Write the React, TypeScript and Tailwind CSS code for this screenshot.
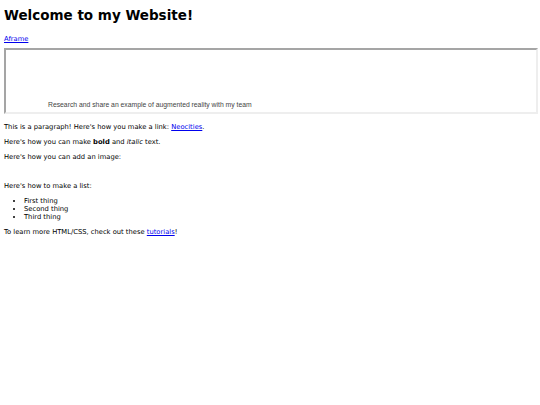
export default function App() {
  return (
    <div className="min-h-[405px] bg-white px-1 pt-px text-[6.75px] leading-[7.86px] text-black font-['DejaVu_Sans',Verdana,sans-serif]">
      <h1 className="mt-[7px] mb-[12px] text-[13.5px] font-bold leading-[15.7px]">Welcome to my Website!</h1>

      <p className="mt-[6.75px] mb-[4.75px]">
        <a href="#" className="text-[#0000ee] underline">Aframe</a>
      </p>

      {/* embedded frame */}
      <div className="h-[66px] w-[534px] border-2 border-t-[#a5a5a5] border-l-[#a5a5a5] border-r-[#eeeeee] border-b-[#eeeeee]">
        <div className="flex h-full items-end pb-[4px] pl-[42px]">
          <span className="font-['Liberation_Sans',Arial,sans-serif] text-[6.8px] leading-[7.8px] text-[#444]">
            Research and share an example of augmented reality with my team
          </span>
        </div>
      </div>

      <p className="mt-[10px] mb-[6.75px]">
        This is a paragraph! Here's how you make a link:{' '}
        <a href="#" className="text-[#0000ee] underline">Neocities</a>.
      </p>
      <p className="my-[6.75px]">
        Here's how you can make <strong className="font-bold">bold</strong> and <em>italic</em> text.
      </p>
      <p className="my-[6.75px]">Here's how you can add an image:</p>
      <p className="my-[6.75px] h-[7.86px]"></p>
      <p className="my-[6.75px]">Here's how to make a list:</p>

      <ul className="mt-[7.75px] mb-[6.75px] list-disc pl-[20px]">
        <li>First thing</li>
        <li>Second thing</li>
        <li>Third thing</li>
      </ul>

      <p className="my-[6.75px]">
        To learn more HTML/CSS, check out these{' '}
        <a href="#" className="text-[#0000ee] underline">tutorials</a>!
      </p>
    </div>
  )
}
